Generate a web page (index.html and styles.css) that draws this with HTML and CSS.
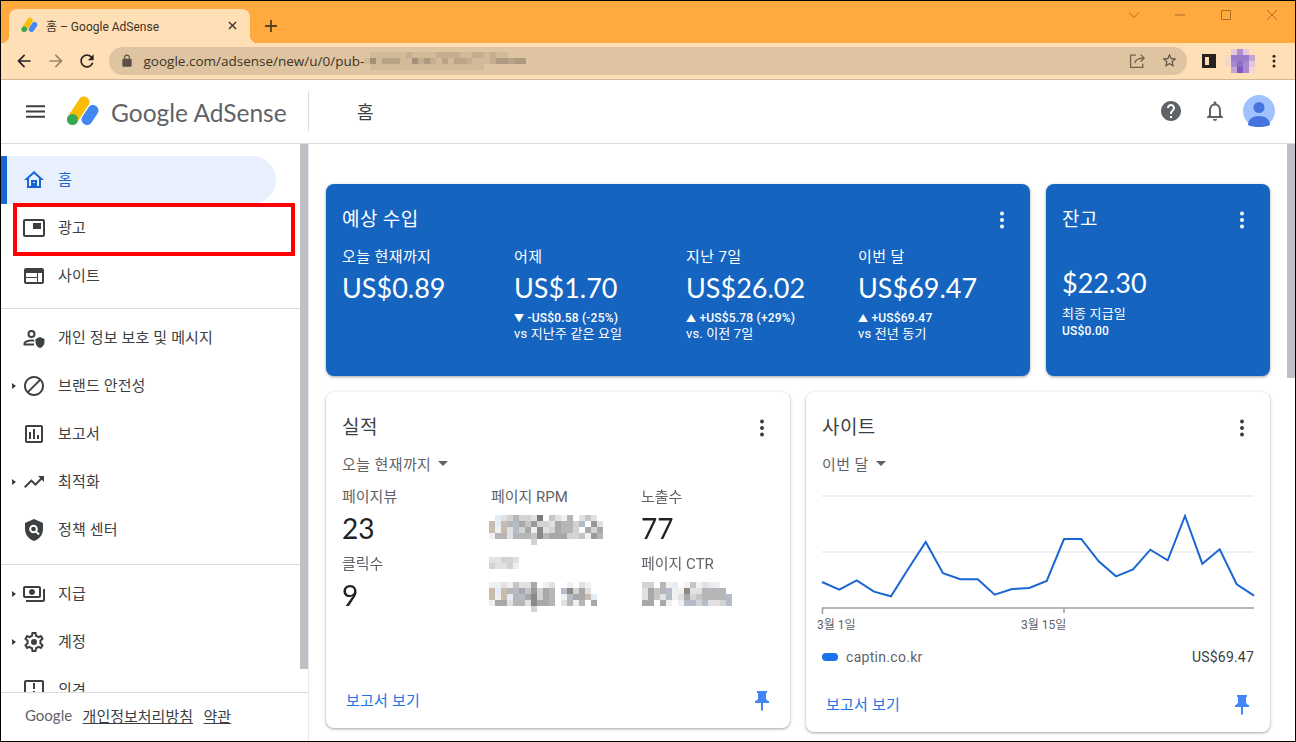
FILE: index.html
```html
<!DOCTYPE html>
<html lang="ko">
<head>
    <meta charset="UTF-8">
    <meta name="viewport" content="width=device-width, initial-scale=1.0">
    <title>홈 – Google AdSense</title>
    <link rel="stylesheet" href="styles.css">
</head>
<body>
    <svg class="sprites" width="0" height="0">
        <symbol id="logo" viewBox="0 0 34 32">
            <path d="M6.5 24.5L18 7" stroke="#fbbc04" stroke-width="11" stroke-linecap="round"/>
            <path d="M21 24.5l6-9" stroke="#4285f4" stroke-width="11" stroke-linecap="round"/>
            <circle cx="6.5" cy="24.5" r="5.5" fill="#34a853"/>
        </symbol>
        <symbol id="more" viewBox="0 0 24 24">
            <circle cx="12" cy="5.5" r="2"/><circle cx="12" cy="12" r="2"/><circle cx="12" cy="18.5" r="2"/>
        </symbol>
        <symbol id="pin" viewBox="0 0 24 24">
            <path d="M16 9V4h1V2H7v2h1v5c0 1.66-1.34 3-3 3v2h5.97v7l1 1 1-1v-7H19v-2c-1.66 0-3-1.34-3-3z"/>
        </symbol>
    </svg>

    <div class="window">
        <div class="tabstrip">
            <div class="tab">
                <svg class="favicon"><use href="#logo"/></svg>
                <span class="tab-title">홈 – Google AdSense</span>
                <svg class="tab-close" viewBox="0 0 10 10"><path d="M1 1l8 8M9 1l-8 8"/></svg>
            </div>
            <svg class="new-tab" viewBox="0 0 12 12"><path d="M6 0v12M0 6h12"/></svg>
            <div class="window-controls">
                <svg viewBox="0 0 12 12"><path d="M1 3.5l5 5 5-5"/></svg>
                <svg viewBox="0 0 12 12"><path d="M1 6h10"/></svg>
                <svg viewBox="0 0 12 12"><path d="M1.5 1.5h9v9h-9z"/></svg>
                <svg viewBox="0 0 12 12"><path d="M1 1l10 10M11 1L1 11"/></svg>
            </div>
        </div>

        <div class="toolbar">
            <svg class="tool" viewBox="0 0 24 24"><path d="M20 11H7.83l5.59-5.59L12 4l-8 8 8 8 1.41-1.41L7.83 13H20v-2z"/></svg>
            <svg class="tool tool-off" viewBox="0 0 24 24"><path d="M12 4l-1.41 1.41L16.17 11H4v2h12.17l-5.58 5.59L12 20l8-8z"/></svg>
            <svg class="tool" viewBox="0 0 24 24"><path d="M17.65 6.35C16.2 4.9 14.21 4 12 4c-4.42 0-7.99 3.58-7.99 8s3.57 8 7.99 8c3.73 0 6.84-2.55 7.73-6h-2.08c-.82 2.33-3.04 4-5.65 4-3.31 0-6-2.69-6-6s2.69-6 6-6c1.66 0 3.14.69 4.22 1.78L13 11h7V4l-2.35 2.35z"/></svg>
            <div class="address">
                <svg class="lock" viewBox="0 0 24 24"><path d="M18 8h-1V6c0-2.76-2.24-5-5-5S7 3.24 7 6v2H6c-1.1 0-2 .9-2 2v10c0 1.1.9 2 2 2h12c1.1 0 2-.9 2-2V10c0-1.1-.9-2-2-2zM9 6c0-1.66 1.34-3 3-3s3 1.34 3 3v2H9V6z"/></svg>
                <span class="url">google.com/adsense/new/u/0/pub-</span>
                <canvas class="mosaic" data-rows=".11111121111222211221211...|151333115242131332111244344|.1111111111111111111......"></canvas>
                <svg class="addr-icon share" viewBox="0 0 16 16"><path d="M6.5 3H1.5v11.5H13V11M5.5 10.500c.5-3 3-4.700 8.500-4.700M11 2.500l3.200 3.300L11 9"/></svg>
                <svg class="addr-icon star" viewBox="0 0 24 24"><path d="M22 9.24l-7.19-.62L12 2 9.19 8.63 2 9.24l5.46 4.73L5.82 21 12 17.27 18.18 21l-1.63-7.03L22 9.24zM12 15.4l-3.76 2.27 1-4.28-3.32-2.88 4.38-.38L12 6.1l1.71 4.04 4.38.38-3.32 2.88 1 4.28L12 15.4z"/></svg>
            </div>
            <div class="side-panel"></div>
            <svg class="profile" viewBox="0 0 30 24" shape-rendering="crispEdges">
                <path fill="#e8c8d8" d="M6 0h6v6H6zM18 0h6v6h-6z"/>
                <path fill="#b08fcf" d="M12 0h6v6h-6z"/>
                <path fill="#f3d6cc" d="M0 6h6v12H0z"/>
                <path fill="#9a7bcb" d="M6 6h18v6H6z"/>
                <path fill="#a78bd0" d="M6 12h6v6H6zM18 12h6v6h-6z"/>
                <path fill="#8e6cc8" d="M12 12h6v6h-6z"/>
                <path fill="#c3a6cf" d="M24 6h6v6h-6z"/>
                <path fill="#e2c6d8" d="M24 12h6v6h-6z"/>
                <path fill="#c4a5d0" d="M6 18h6v6H6z"/>
                <path fill="#8358c4" d="M12 18h6v6h-6z"/>
                <path fill="#a98ad0" d="M18 18h6v6h-6z"/>
                <path fill="#f3d6cc" d="M24 18h6v6h-6z"/>
            </svg>
            <svg class="chrome-menu" viewBox="0 0 24 24"><use href="#more"/></svg>
        </div>

        <header class="app-header">
            <svg class="hamburger" viewBox="0 0 18 12"><path d="M0 0h18v2H0zM0 5h18v2H0zM0 10h18v2H0z"/></svg>
            <svg class="logo"><use href="#logo"/></svg>
            <span class="brand">Google AdSense</span>
            <div class="header-divider"></div>
            <span class="page-title">홈</span>
            <svg class="help" viewBox="0 0 24 24"><path d="M12 2C6.48 2 2 6.48 2 12s4.48 10 10 10 10-4.48 10-10S17.52 2 12 2zm1 17h-2v-2h2v2zm2.07-7.75l-.9.92C13.45 12.9 13 13.5 13 15h-2v-.5c0-1.1.45-2.1 1.17-2.83l1.24-1.26c.37-.36.59-.86.59-1.41 0-1.1-.9-2-2-2s-2 .9-2 2H8c0-2.21 1.79-4 4-4s4 1.79 4 4c0 .88-.36 1.68-.93 2.25z"/></svg>
            <svg class="bell" viewBox="0 0 24 24"><path d="M12 22c1.1 0 2-.9 2-2h-4c0 1.1.9 2 2 2zm6-6v-5c0-3.07-1.63-5.64-4.5-6.32V4c0-.83-.67-1.5-1.5-1.5s-1.5.67-1.5 1.5v.68C7.64 5.36 6 7.92 6 11v5l-2 2v1h16v-1l-2-2zm-2 1H8v-6c0-2.48 1.51-4.5 4-4.5s4 2.02 4 4.5v6z"/></svg>
            <svg class="avatar" viewBox="0 0 32 32">
                <circle cx="16" cy="16" r="16" fill="#a0c3ff"/>
                <circle cx="16" cy="12.5" r="5.5" fill="#4374e0"/>
                <path d="M5 30c0-6 5-9 11-9s11 3 11 9c-3 1.5-7 2-11 2s-8-.5-11-2z" fill="#4374e0"/>
            </svg>
        </header>

        <div class="app-body">
            <aside class="sidebar">
                <nav class="nav">
                    <div class="nav-list">
                        <a class="nav-item active">
                            <svg viewBox="0 0 24 24"><path d="M12 5.69l5 4.5V18h-2v-6H9v6H7v-7.81l5-4.5M12 3L2 12h3v8h6v-6h2v6h6v-8h3L12 3z"/><path d="M10 15h4v5h-4z"/></svg>
                            <span>홈</span>
                        </a>
                        <a class="nav-item">
                            <svg viewBox="0 0 24 24"><path d="M21 3H3C1.9 3 1 3.9 1 5v14c0 1.1.9 2 2 2h18c1.1 0 2-.9 2-2V5c0-1.1-.9-2-2-2zm0 16H3V5h18v14zM19 7h-8v6h8V7z"/></svg>
                            <span>광고</span>
                            <div class="highlight"></div>
                        </a>
                        <a class="nav-item">
                            <svg viewBox="0 0 24 24"><path d="M20 4H4c-1.1 0-1.99.9-1.99 2L2 18c0 1.1.9 2 2 2h16c1.1 0 2-.9 2-2V6c0-1.1-.9-2-2-2zm-5 14H4v-4h11v4zm0-5H4V9h11v4zm5 5h-4V9h4v9z"/></svg>
                            <span>사이트</span>
                        </a>
                    </div>
                    <div class="nav-list">
                        <a class="nav-item">
                            <svg viewBox="0 0 24 24"><path fill-rule="evenodd" d="M9.5 4a4 4 0 110 8 4 4 0 010-8zm0 2a2 2 0 100 4 2 2 0 000-4zM1.5 19v-1.5c0-2.8 5-4 8-4 .9 0 1.9.1 2.9.3l-.4 2c-.8-.2-1.7-.3-2.5-.3-2.5 0-5.8 1-6 2H12v2H1.5z"/><path d="M18 11l4.5 2v3c0 2.8-1.9 5.3-4.5 6-2.6-.7-4.5-3.2-4.5-6v-3z"/></svg>
                            <span>개인 정보 보호 및 메시지</span>
                        </a>
                        <a class="nav-item expandable">
                            <svg viewBox="0 0 24 24"><path d="M12 2C6.48 2 2 6.48 2 12s4.48 10 10 10 10-4.48 10-10S17.52 2 12 2zM4 12c0-4.42 3.58-8 8-8 1.85 0 3.55.63 4.9 1.69L5.69 16.9C4.63 15.55 4 13.85 4 12zm8 8c-1.85 0-3.55-.63-4.9-1.69L18.31 7.1C19.37 8.45 20 10.15 20 12c0 4.42-3.58 8-8 8z"/></svg>
                            <span>브랜드 안전성</span>
                        </a>
                        <a class="nav-item">
                            <svg viewBox="0 0 24 24"><path d="M19 3H5c-1.1 0-2 .9-2 2v14c0 1.1.9 2 2 2h14c1.1 0 2-.9 2-2V5c0-1.1-.9-2-2-2zm0 16H5V5h14v14zM7 10h2v7H7zm4-3h2v10h-2zm4 6h2v4h-2z"/></svg>
                            <span>보고서</span>
                        </a>
                        <a class="nav-item expandable">
                            <svg viewBox="0 0 24 24"><path d="M16 6l2.29 2.29-4.88 4.88-4-4L2 16.59 3.41 18l6-6 4 4 6.3-6.29L22 12V6z"/></svg>
                            <span>최적화</span>
                        </a>
                        <a class="nav-item">
                            <svg viewBox="0 0 24 24"><path d="M12 1L3 5v6c0 5.55 3.84 10.74 9 12 5.16-1.26 9-6.45 9-12V5l-9-4z"/><circle cx="11.5" cy="11" r="3.3" fill="none" stroke="#fff" stroke-width="2"/><path d="M14 13.5l3 3" stroke="#fff" stroke-width="2"/></svg>
                            <span>정책 센터</span>
                        </a>
                    </div>
                    <div class="nav-list">
                        <a class="nav-item expandable">
                            <svg viewBox="0 0 24 24"><path d="M19 14V6c0-1.1-.9-2-2-2H3c-1.1 0-2 .9-2 2v8c0 1.1.9 2 2 2h14c1.1 0 2-.9 2-2zm-2 0H3V6h14v8zm-7-7c-1.66 0-3 1.34-3 3s1.34 3 3 3 3-1.34 3-3-1.34-3-3-3zm13 0v11c0 1.1-.9 2-2 2H4v-2h17V7h2z"/></svg>
                            <span>지급</span>
                        </a>
                        <a class="nav-item expandable">
                            <svg viewBox="0 0 24 24"><path d="M19.43 12.98c.04-.32.07-.64.07-.98 0-.34-.03-.66-.07-.98l2.11-1.65c.19-.15.24-.42.12-.64l-2-3.46c-.09-.16-.26-.25-.44-.25-.06 0-.12.01-.17.03l-2.49 1c-.52-.4-1.08-.73-1.69-.98l-.38-2.65C14.46 2.18 14.25 2 14 2h-4c-.25 0-.46.18-.49.42l-.38 2.65c-.61.25-1.17.59-1.69.98l-2.49-1c-.06-.02-.12-.03-.18-.03-.17 0-.34.09-.43.25l-2 3.46c-.13.22-.07.49.12.64l2.11 1.65c-.04.32-.07.65-.07.98 0 .33.03.66.07.98l-2.11 1.65c-.19.15-.24.42-.12.64l2 3.46c.09.16.26.25.44.25.06 0 .12-.01.17-.03l2.49-1c.52.4 1.08.73 1.69.98l.38 2.65c.03.24.24.42.49.42h4c.25 0 .46-.18.49-.42l.38-2.65c.61-.25 1.17-.59 1.69-.98l2.49 1c.06.02.12.03.18.03.17 0 .34-.09.43-.25l2-3.46c.12-.22.07-.49-.12-.64l-2.11-1.65zm-1.98-1.71c.04.31.05.52.05.73 0 .21-.02.43-.05.73l-.14 1.13.89.7 1.08.84-.7 1.21-1.27-.51-1.04-.42-.9.68c-.43.32-.84.56-1.25.73l-1.06.43-.16 1.13-.2 1.35h-1.4l-.19-1.35-.16-1.13-1.06-.43c-.43-.18-.83-.41-1.23-.71l-.91-.7-1.06.43-1.27.51-.7-1.21 1.08-.84.89-.7-.14-1.13c-.03-.31-.05-.54-.05-.74s.02-.43.05-.73l.14-1.13-.89-.7-1.08-.84.7-1.21 1.27.51 1.04.42.9-.68c.43-.32.84-.56 1.25-.73l1.06-.43.16-1.13.2-1.35h1.39l.19 1.35.16 1.13 1.06.43c.43.18.83.41 1.23.71l.91.7 1.06-.43 1.27-.51.7 1.21-1.07.85-.89.7.14 1.13z"/><circle cx="12" cy="12" r="3"/></svg>
                            <span>계정</span>
                        </a>
                        <a class="nav-item">
                            <svg viewBox="0 0 24 24"><path d="M20 2H4c-1.1 0-2 .9-2 2v18l4-4h14c1.1 0 2-.9 2-2V4c0-1.1-.9-2-2-2zm0 14H5.17L4 17.17V4h16v12zM11 5h2v6h-2zm0 8h2v2h-2z"/></svg>
                            <span>의견</span>
                        </a>
                    </div>
                    <div class="nav-thumb"></div>
                </nav>
                <footer class="side-footer">
                    <span class="footer-google">Google</span>
                    <a>개인정보처리방침</a>
                    <a>약관</a>
                </footer>
            </aside>

            <main class="main">
                <div class="main-thumb"></div>
                <div class="card-row">
                    <section class="card blue earnings">
                        <div class="card-head">
                            <h2>예상 수입</h2>
                            <svg class="more"><use href="#more"/></svg>
                        </div>
                        <div class="earn-cols">
                            <div class="earn-col">
                                <div class="label">오늘 현재까지</div>
                                <div class="value">US$0.89</div>
                            </div>
                            <div class="earn-col">
                                <div class="label">어제</div>
                                <div class="value">US$1.70</div>
                                <div class="delta"><span class="arrow">▼</span> -US$0.58 (-25%)<br><span class="note">vs 지난주 같은 요일</span></div>
                            </div>
                            <div class="earn-col">
                                <div class="label">지난 7일</div>
                                <div class="value">US$26.02</div>
                                <div class="delta"><span class="arrow">▲</span> +US$5.78 (+29%)<br><span class="note">vs. 이전 7일</span></div>
                            </div>
                            <div class="earn-col">
                                <div class="label">이번 달</div>
                                <div class="value">US$69.47</div>
                                <div class="delta"><span class="arrow">▲</span> +US$69.47<br><span class="note">vs 전년 동기</span></div>
                            </div>
                        </div>
                    </section>
                    <section class="card blue balance">
                        <div class="card-head">
                            <h2>잔고</h2>
                            <svg class="more"><use href="#more"/></svg>
                        </div>
                        <div class="value balance-value">$22.30</div>
                        <div class="delta balance-note"><span class="note">최종 지급일</span><br>US$0.00</div>
                    </section>
                </div>

                <div class="card-row">
                    <section class="card white performance">
                        <div class="card-head">
                            <h2>실적</h2>
                            <svg class="more"><use href="#more"/></svg>
                        </div>
                        <div class="range">오늘 현재까지<i class="caret"></i></div>
                        <div class="stats">
                            <div>
                                <div class="stat-label">페이지뷰</div>
                                <div class="stat-value">23</div>
                            </div>
                            <div>
                                <div class="stat-label">페이지 RPM</div>
                                <div class="stat-value"><canvas class="mosaic" data-rows="0u2353329042150242|bub5g6473326553g072|b1b2g36182365530636|1552555485666334175|.......3"></canvas></div>
                            </div>
                            <div>
                                <div class="stat-label">노출수</div>
                                <div class="stat-value">77</div>
                            </div>
                            <div>
                                <div class="stat-label">클릭수</div>
                                <div class="stat-value">9</div>
                            </div>
                            <div>
                                <div class="stat-label"><canvas class="mosaic" data-rows="22332|32231"></canvas></div>
                                <div class="stat-value"><canvas class="mosaic" data-rows="11214226012001021.|bub5g6473650g83620|b1bu5g68365 1g66bu|16625528665 2515 6.|.......3"></canvas></div>
                            </div>
                            <div class="stat-ctr">
                                <div class="stat-label">페이지 CTR</div>
                                <div class="stat-value"><canvas class="mosaic" data-rows="33051u01412u1.|2645g118225555.|2642g126345555g|66061 1gg3g223g"></canvas></div>
                            </div>
                        </div>
                        <div class="card-foot">
                            <a class="report-link">보고서 보기</a>
                            <svg class="pin"><use href="#pin"/></svg>
                        </div>
                    </section>

                    <section class="card white sites">
                        <div class="card-head">
                            <h2>사이트</h2>
                            <svg class="more"><use href="#more"/></svg>
                        </div>
                        <div class="range">이번 달<i class="caret"></i></div>
                        <svg class="chart" width="432" height="145">
                            <path class="grid-line" d="M0 5h432M0 61h432"/>
                            <path class="axis" d="M0 117h432M.5 117v6M242 117v5"/>
                            <polyline class="series" points="0,91 17.3,98.7 34.7,89.3 52,100.7 69,105.3 86.3,77.7 103.7,51 121,82.3 138.3,88.3 155.7,88.3 172.7,103.7 190,98 207.3,97 224.7,90 242,48 259.3,48 276.7,70.3 294,85.3 311,78.3 328.3,58.7 345.7,69.3 363,25 380.3,72.7 397.7,58.3 414.7,93.3 432,104.7"/>
                            <text x="-5" y="138">3월 1일</text>
                            <text x="199" y="138">3월 15일</text>
                        </svg>
                        <div class="legend">
                            <i class="swatch"></i>
                            <span class="legend-name">captin.co.kr</span>
                            <span class="legend-value">US$69.47</span>
                        </div>
                        <div class="card-foot">
                            <a class="report-link">보고서 보기</a>
                            <svg class="pin"><use href="#pin"/></svg>
                        </div>
                    </section>
                </div>
            </main>
        </div>
    </div>

    <script src="mosaic.js"></script>
</body>
</html>
```

FILE: styles.css
```css
* {
    box-sizing: border-box;
}

html,
body {
    margin: 0;
    height: 742px;
    overflow: hidden;
    background-color: white;
    font-family: Roboto, "Noto Sans CJK KR", sans-serif;
}

.sprites {
    display: block;
}

.window {
    display: flex;
    flex-direction: column;
    height: 742px;
    border: 1px solid black;
}

/* browser chrome */
.tabstrip {
    display: flex;
    align-items: flex-end;
    flex: none;
    height: 42px;
    padding-left: 8px;
    background-color: #ffa93f;
}

.tab {
    position: relative;
    display: flex;
    align-items: center;
    width: 241px;
    height: 34px;
    padding: 0 13px 2px 12px;
    background-color: #ffdfb5;
    border-radius: 8px 8px 0 0;
}

.tab::before,
.tab::after {
    content: "";
    position: absolute;
    bottom: 0;
    width: 8px;
    height: 8px;
}

.tab::before {
    left: -8px;
    background: radial-gradient(circle at 0 0, transparent 8px, #ffdfb5 8.5px);
}

.tab::after {
    right: -8px;
    background: radial-gradient(circle at 100% 0, transparent 8px, #ffdfb5 8.5px);
}

.favicon {
    width: 17px;
    height: 16px;
    fill: none;
}

.tab-title {
    margin-left: 8px;
    flex: 1;
    font-size: 12px;
    color: #3d3427;
}

.tab-close {
    width: 9px;
    height: 9px;
    fill: none;
    stroke: #3d3427;
    stroke-width: 1.5;
}

.new-tab {
    width: 12px;
    height: 12px;
    margin: 0 0 11px 15px;
    fill: none;
    stroke: #59431f;
    stroke-width: 1.8;
}

.window-controls {
    display: flex;
    gap: 34px;
    align-self: flex-start;
    margin: 8px 17px 0 auto;
}

.window-controls svg {
    width: 12px;
    height: 12px;
    fill: none;
    stroke: #a86f25;
    stroke-width: 1;
}

.toolbar {
    display: flex;
    align-items: center;
    flex: none;
    height: 37px;
    padding-left: 13px;
    padding-bottom: 1px;
    background-color: #ffdfb5;
    border-bottom: 1px solid #cdb998;
}

.tool {
    width: 20px;
    height: 20px;
    margin-right: 11.5px;
    fill: #2b2620;
}

.tool-off {
    fill: #99866c;
}

.address {
    display: flex;
    align-items: center;
    width: 1078px;
    height: 28px;
    padding-left: 11px;
    background-color: #dec4a0;
    border-radius: 14px;
}

.lock {
    width: 14px;
    height: 14px;
    fill: #5a5045;
}

.url {
    margin-left: 10px;
    font-family: "Open Sans", sans-serif;
    font-size: 13.5px;
    color: #3d3427;
    white-space: nowrap;
}

.addr-icon {
    width: 17px;
    height: 17px;
}

.share {
    margin-left: auto;
    fill: none;
    stroke: #6d604e;
    stroke-width: 1.2;
}

.star {
    margin: 0 9px 0 15px;
    fill: #5a5045;
}

.side-panel {
    width: 14px;
    height: 14px;
    margin-left: 15px;
    border: 3px solid #25221e;
    border-right-width: 7px;
    background-color: #ffdfb5;
}

.profile {
    width: 30px;
    height: 24px;
    margin-left: 9px;
}

.chrome-menu {
    width: 18px;
    height: 18px;
    margin-left: 10px;
    fill: #2b2620;
}

/* adsense header */
.app-header {
    display: flex;
    align-items: center;
    flex: none;
    height: 64px;
    padding-right: 20px;
    padding-bottom: 1px;
    border-bottom: 1px solid #dadce0;
}

.hamburger {
    width: 19px;
    height: 13px;
    margin-left: 25px;
    fill: #3c4043;
}

.logo {
    width: 34px;
    height: 32px;
    margin-left: 21px;
    fill: none;
}

.brand {
    width: 197px;
    margin-left: 11px;
    padding-top: 3px;
    font-family: Lato, sans-serif;
    font-size: 24.5px;
    color: #5f6368;
    white-space: nowrap;
}

.header-divider {
    width: 1px;
    height: 40px;
    background-color: #dadce0;
}

.page-title {
    margin-left: 48px;
    font-size: 18px;
    color: #3c4043;
}

.help {
    width: 24px;
    height: 24px;
    margin-left: auto;
    fill: #5f6368;
}

.bell {
    width: 24px;
    height: 24px;
    margin-left: 20px;
    fill: #5f6368;
}

.avatar {
    width: 32px;
    height: 32px;
    margin-left: 16px;
}

/* sidebar */
.app-body {
    display: flex;
    flex: 1;
    min-height: 0;
}

.sidebar {
    display: flex;
    flex-direction: column;
    flex: none;
    width: 308px;
    border-right: 1px solid #e8eaed;
}

.nav {
    position: relative;
    flex: 1;
    min-height: 0;
    overflow: hidden;
    padding-top: 12px;
}

.nav-thumb {
    position: absolute;
    top: 0;
    right: 0;
    width: 8px;
    height: 525px;
    background-color: #bdc1c6;
}

.nav-list {
    width: 299px;
    padding-bottom: 8px;
    margin-bottom: 5px;
    border-bottom: 1px solid #dadce0;
}

.nav-list:nth-child(2) {
    padding-bottom: 10px;
}

.nav-list:last-of-type {
    border-bottom: none;
}

.nav-item {
    position: relative;
    display: flex;
    align-items: center;
    height: 48px;
    padding-left: 21px;
    font-size: 15px;
    letter-spacing: 0.15px;
    color: #3c4043;
}

.nav-item span {
    margin-bottom: 3px;
}

.nav-item svg {
    width: 24px;
    height: 24px;
    margin-right: 12px;
    fill: #3c4043;
}

.nav-item.active {
    width: 275px;
    background-color: #e8f0fe;
    border-left: 6px solid #1967d2;
    border-radius: 0 24px 24px 0;
    color: #1967d2;
}

.nav-item.active svg {
    margin-left: -6px;
    fill: #1967d2;
}

.nav-item.expandable::before {
    content: "";
    position: absolute;
    left: 11px;
    border-left: 4px solid #3c4043;
    border-top: 3px solid transparent;
    border-bottom: 3px solid transparent;
}

.highlight {
    position: absolute;
    top: -1px;
    left: 12px;
    width: 282px;
    height: 53px;
    border: 4.5px solid #ff0000;
}

.side-footer {
    display: flex;
    align-items: center;
    gap: 10.5px;
    flex: none;
    height: 49px;
    padding-left: 24px;
    padding-bottom: 4px;
    background-color: white;
    border-top: 1px solid #dadce0;
    font-size: 15px;
    color: #3c4043;
}

.footer-google {
    font-family: Lato, sans-serif;
    color: #5f6368;
}

.side-footer a {
    text-decoration: underline;
}

/* content */
.main {
    position: relative;
    flex: 1;
    min-width: 0;
    overflow: hidden;
    padding: 40px 0 0 17px;
}

.main-thumb {
    position: absolute;
    top: 0;
    right: 0;
    width: 8px;
    height: 234px;
    background-color: #bdc1c6;
}

.card-row {
    display: flex;
    align-items: flex-start;
    gap: 16px;
    margin-bottom: 16px;
}

.card {
    display: flex;
    flex-direction: column;
    padding: 22px 16px 0;
    border-radius: 8px;
    box-shadow: 0 1px 2px rgba(60,64,67,0.3), 0 1px 3px 1px rgba(60,64,67,0.15);
}

.card.blue {
    height: 192px;
    background-color: #1565c0;
    color: white;
}

.card.white {
    width: 464px;
    background-color: white;
    color: #3c4043;
}

.earnings {
    width: 704px;
}

.balance {
    width: 224px;
}

.performance {
    height: 336px;
}

.sites {
    height: 340px;
}

.card-head {
    display: flex;
    align-items: center;
    justify-content: space-between;
    height: 24px;
}

h2 {
    margin: 0 0 2px;
    font-size: 19px;
    font-weight: 400;
    letter-spacing: 0.4px;
}

.more {
    width: 24px;
    height: 24px;
    margin-top: 4px;
    fill: currentColor;
}

.earn-cols {
    display: flex;
    margin-top: 17px;
}

.earn-col {
    flex: none;
    width: 172px;
}

.label {
    height: 20px;
    font-size: 15px;
    line-height: 20px;
    letter-spacing: 0.4px;
}

.value {
    height: 36px;
    margin-top: 3px;
    font-family: Lato, sans-serif;
    font-size: 27px;
    line-height: 36px;
    white-space: nowrap;
}

.delta {
    margin-top: 4px;
    font-size: 12px;
    font-weight: 500;
    line-height: 17px;
    letter-spacing: 0.2px;
}

.arrow {
    font-size: 10px;
}

.note {
    font-size: 13px;
    font-weight: 400;
    letter-spacing: 0.15px;
}

.earn-col .note {
    line-height: 13px;
    vertical-align: 2px;
}

.balance-value {
    margin-top: 35px;
}

.range {
    display: flex;
    align-items: center;
    height: 20px;
    margin-top: 15px;
    font-size: 15px;
    letter-spacing: 0.4px;
    color: #5f6368;
}

.caret {
    margin-left: 7px;
    border-top: 5px solid #5f6368;
    border-left: 5px solid transparent;
    border-right: 5px solid transparent;
}

.stats {
    display: grid;
    grid-template-columns: 149px 150px 133px;
    row-gap: 8px;
    margin-top: 14px;
}

.stat-label {
    display: flow-root;
    height: 20px;
    font-size: 15px;
    line-height: 20px;
    color: #5f6368;
}

.stat-label .mosaic {
    margin: 3px 0 0 -2px;
}

.stat-value {
    display: flow-root;
    height: 36px;
    margin-top: 3px;
    font-family: Lato, sans-serif;
    font-size: 28px;
    line-height: 36px;
    color: #202124;
}

.stat-value .mosaic {
    margin: 5px 0 0 -2px;
}

.stat-ctr .stat-value .mosaic {
    margin-left: 1px;
}

.mosaic {
    display: block;
    image-rendering: pixelated;
}

.card-foot {
    display: flex;
    align-items: center;
    justify-content: space-between;
    height: 24px;
    margin-top: auto;
    margin-bottom: 15px;
    padding-left: 4px;
}

.report-link {
    margin-bottom: 4px;
    font-size: 15px;
    letter-spacing: 0.2px;
    color: #1a73e8;
}

.pin {
    width: 24px;
    height: 24px;
    fill: #4285f4;
}

.chart {
    display: block;
    margin-top: 18px;
    overflow: visible;
    font-size: 12px;
}

.grid-line {
    fill: none;
    stroke: #e8eaed;
    stroke-width: 1.5;
}

.axis {
    fill: none;
    stroke: #9aa0a6;
    stroke-width: 1.5;
}

.series {
    fill: none;
    stroke: #1967d2;
    stroke-width: 2;
}

.chart text {
    fill: #5f6368;
}

.legend {
    display: flex;
    align-items: center;
    height: 20px;
    margin-top: 11px;
    font-size: 14px;
}

.swatch {
    width: 16px;
    height: 8px;
    background-color: #1a73e8;
    border-radius: 4px;
}

.legend-name {
    margin-left: 8px;
    letter-spacing: 0.3px;
    color: #5f6368;
}

.legend-value {
    margin-left: auto;
    letter-spacing: 0.2px;
    color: #3c4043;
}
```

FILE: mosaic.js
```js
// blurred-out figures: each character is one 6px cell
const TINTS = {
    b: 'rgb(200,188,174)',
    u: 'rgb(228,237,245)',
    g: 'rgb(180,188,200)'
};

document.querySelectorAll('.mosaic').forEach((canvas) => {
    const rows = canvas.dataset.rows.split('|');
    const cols = Math.max(...rows.map((row) => row.length));

    canvas.width = cols;
    canvas.height = rows.length;
    canvas.style.width = cols * 6 + 'px';
    canvas.style.height = rows.length * 6 + 'px';

    const ctx = canvas.getContext('2d');
    rows.forEach((row, y) => {
        [...row].forEach((cell, x) => {
            if (cell === '.' || cell === ' ') return;
            ctx.fillStyle = TINTS[cell] || `rgba(50,45,45,${cell * 0.07})`;
            ctx.fillRect(x, y, 1, 1);
        });
    });
});
```
